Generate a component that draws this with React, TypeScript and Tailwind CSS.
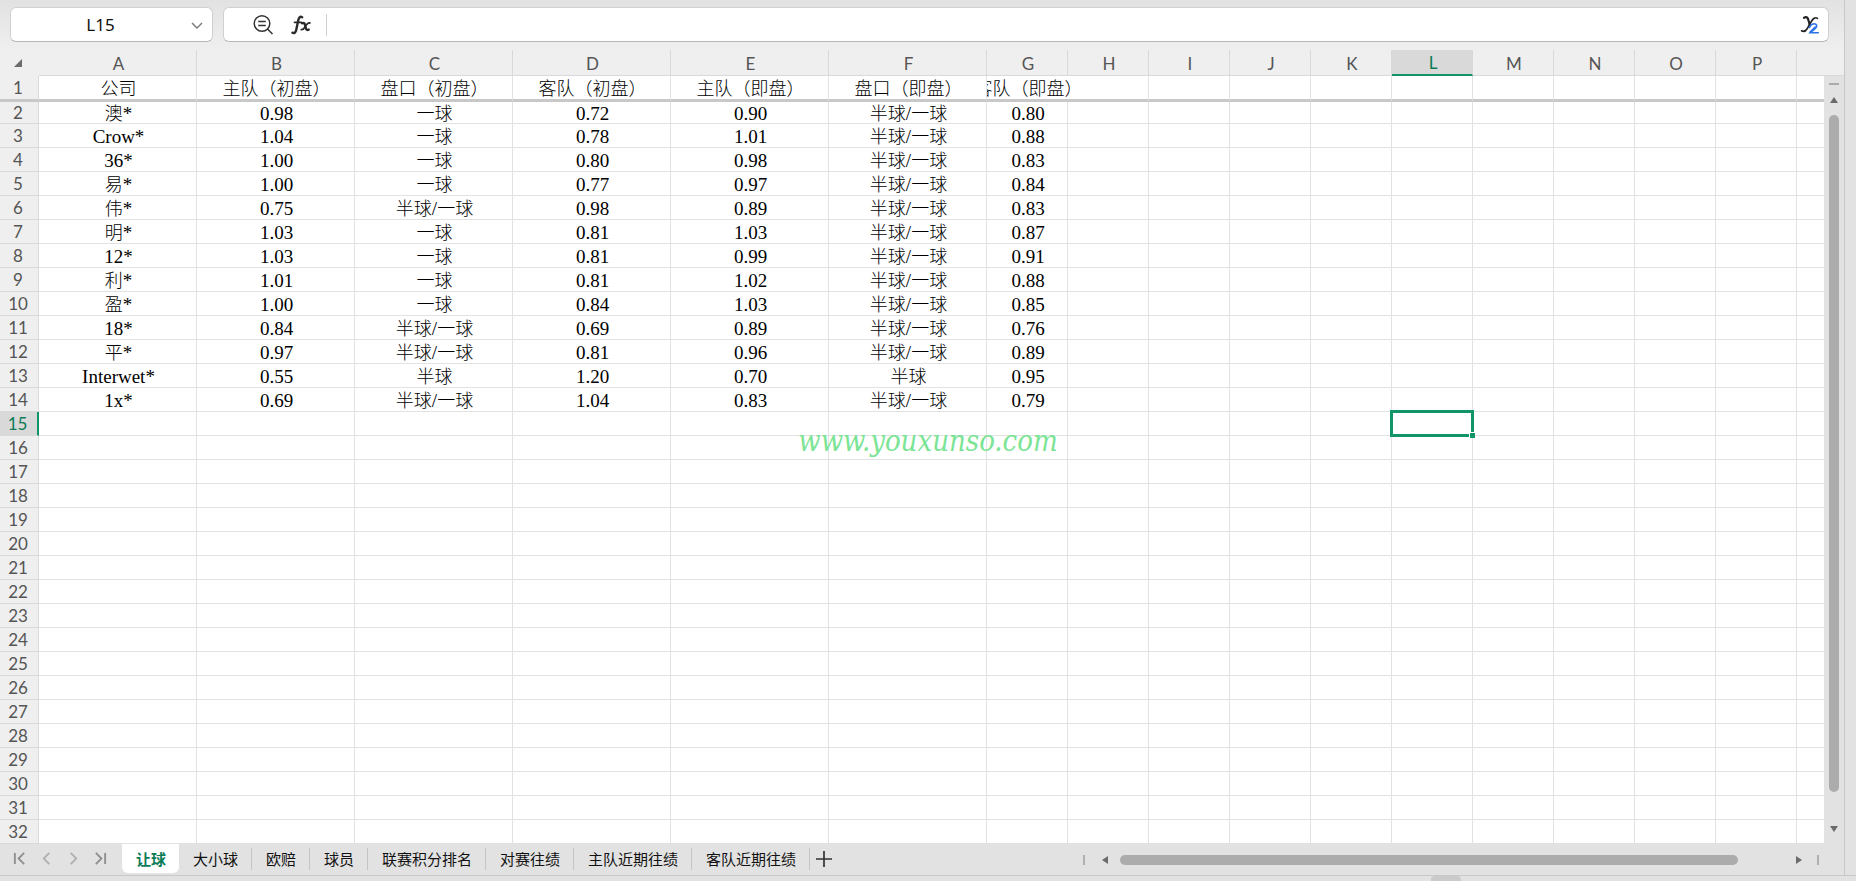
import { useState } from "react";

const wideCols = ["A", "B", "C", "D", "E", "F"];
const narrowCols = ["G", "H", "I", "J", "K", "L", "M", "N", "O", "P"];
const columns = [...wideCols, ...narrowCols];

const cells: string[][] = [
  ["公司", "主队（初盘）", "盘口（初盘）", "客队（初盘）", "主队（即盘）", "盘口（即盘）", "客队（即盘）"],
  ["澳*", "0.98", "一球", "0.72", "0.90", "半球/一球", "0.80"],
  ["Crow*", "1.04", "一球", "0.78", "1.01", "半球/一球", "0.88"],
  ["36*", "1.00", "一球", "0.80", "0.98", "半球/一球", "0.83"],
  ["易*", "1.00", "一球", "0.77", "0.97", "半球/一球", "0.84"],
  ["伟*", "0.75", "半球/一球", "0.98", "0.89", "半球/一球", "0.83"],
  ["明*", "1.03", "一球", "0.81", "1.03", "半球/一球", "0.87"],
  ["12*", "1.03", "一球", "0.81", "0.99", "半球/一球", "0.91"],
  ["利*", "1.01", "一球", "0.81", "1.02", "半球/一球", "0.88"],
  ["盈*", "1.00", "一球", "0.84", "1.03", "半球/一球", "0.85"],
  ["18*", "0.84", "半球/一球", "0.69", "0.89", "半球/一球", "0.76"],
  ["平*", "0.97", "半球/一球", "0.81", "0.96", "半球/一球", "0.89"],
  ["Interwet*", "0.55", "半球", "1.20", "0.70", "半球", "0.95"],
  ["1x*", "0.69", "半球/一球", "1.04", "0.83", "半球/一球", "0.79"],
];

const sheets = ["让球", "大小球", "欧赔", "球员", "联赛积分排名", "对赛往绩", "主队近期往绩", "客队近期往绩"];
const rows = Array.from({ length: 32 }, (_, i) => i + 1);

// Latin runs get a serif face, Chinese runs keep the cell font
function CellText({ text }: { text: string }) {
  return (
    <span>
      {text.split(/([\x20-\x7e]+)/).filter(Boolean).map((part, i) =>
        /^[\x20-\x7e]/.test(part) ? (
          <span key={i} className="font-['Liberation_Serif',serif] text-[19px] leading-[18px] font-normal">{part}</span>
        ) : (
          <span key={i}>{part}</span>
        )
      )}
    </span>
  );
}

function FormulaBar() {
  return (
    <div className="flex h-[50px] shrink-0 items-start gap-2.5 bg-linear-to-b from-[#e2e2e2] to-[#efefef] pt-[7px] pr-[15px] pl-2.5">
      <div className="flex h-[35px] w-[203px] items-center rounded-md border border-[#d0d0d0] border-b-[#b8b8b8] bg-white">
        <input
          aria-label="名称框"
          defaultValue="L15"
          className="w-[179px] bg-transparent text-center font-['Noto_Sans',sans-serif] text-[17px] text-[#111] outline-none"
        />
        <button aria-label="展开名称" className="text-[#777]">
          <svg width="14" height="14" viewBox="0 0 14 14" fill="none" stroke="currentColor" strokeWidth="1.4">
            <path d="M2 5l5 5 5-5" />
          </svg>
        </button>
      </div>
      <div className="flex h-[35px] flex-1 items-center rounded-md border border-[#d0d0d0] border-b-[#b8b8b8] bg-white pr-2 pl-7">
        <button aria-label="浏览公式" className="text-[#333]">
          <svg width="22" height="22" viewBox="0 0 22 22" fill="none" stroke="currentColor" strokeWidth="1.5">
            <circle cx="10" cy="9.5" r="7.8" />
            <path d="M6.2 7.500h7.600M6.200 11.500h7.600M15.500 15l5 5" />
          </svg>
        </button>
        <button aria-label="插入函数" className="ml-4 text-[#2b2b2b]">
          <svg width="22" height="22" viewBox="0 0 22 22" fill="none" stroke="currentColor" strokeLinecap="round">
            <path d="M12.200 3.200C10 2 8.800 3.800 8.200 6.500L6.200 16c-.6 2.700-1.800 3.600-3.800 2.700" strokeWidth="2.400" />
            <path d="M4.500 8.300h6.800" strokeWidth="1.800" />
            <path d="M12 9.300c2-1 2.700.2 3.200 2.200l.7 2.700c.4 1.600 1.200 2.200 2.800 1.400" strokeWidth="2.400" />
            <path d="M19.800 9c-2.300-.4-3.800 2.200-5 4.200-.9 1.600-1.800 2.700-3.500 2.500" strokeWidth="1.800" />
          </svg>
        </button>
        <div className="ml-3.5 h-[22px] w-px bg-[#d0d0d0]" />
        <input aria-label="编辑栏" className="min-w-0 flex-1 bg-transparent px-2 text-[17px] outline-none" />
        <button aria-label="公式工具">
          <svg width="20" height="20" viewBox="0 0 20 20" fill="none" strokeLinecap="round">
            <path d="M4 2.800c3-1.600 4 .2 4.700 3.200l1.200 4.500" stroke="#222" strokeWidth="2.200" />
            <path d="M17.500 3.300c-2.500-1.600-4.500.3-6.200 3.200l-4 7C5.800 16 4 17.300 1.500 15.800" stroke="#222" strokeWidth="1.600" />
            <path d="M9.500 12.500c1-3 4-4.500 6.300-3.200 2 1.200.4 3.400-1.500 5l-4 3.400h8" stroke="#2b74e4" strokeWidth="1.600" />
            <path d="M10 17l5-5" stroke="#2b74e4" strokeWidth="1.400" />
          </svg>
        </button>
      </div>
    </div>
  );
}

function Grid() {
  return (
    <div className="min-w-0 flex-1 overflow-hidden bg-white">
      <table className="w-full table-fixed border-separate border-spacing-0 font-[Lato,sans-serif] text-[17px] leading-5 text-[#555]">
        <colgroup>
          <col className="w-[39px]" />
          {wideCols.map((c) => <col key={c} className="w-[158px]" />)}
          {narrowCols.map((c) => <col key={c} className="w-[81px]" />)}
          <col />
        </colgroup>
        <thead>
          <tr className="h-[26px] bg-[#efefef]">
            <th className="border-b border-[#efefef] p-0">
              <svg className="ml-3.5" width="8" height="8" viewBox="0 0 8 8" fill="#6b6b6b" aria-label="全选">
                <path d="M8 0v8H0z" />
              </svg>
            </th>
            {columns.map((c) => (
              <th
                key={c}
                scope="col"
                className={`border-r border-[#d9d9d9] p-0 pt-0.5 pl-0.5 font-normal ${
                  c === "L" ? "border-b-2 border-b-[#12946a] bg-[#d9d9d9] text-[#0c7c57]" : "border-b"
                }`}
              >
                {c}
              </th>
            ))}
            <th className="border-b border-[#d9d9d9] p-0" />
          </tr>
        </thead>
        <tbody>
          {rows.map((r) => {
            const line = r === 1 ? "border-b-3 border-b-[#c8c8c8]" : "border-b";
            return (
              <tr key={r} className={r === 1 ? "h-[26px]" : r === 2 ? "h-[22px]" : "h-6"}>
                <th
                  scope="row"
                  className={`p-0 pr-0.5 font-normal ${line} ${
                    r === 15
                      ? "border-r-2 border-r-[#12946a] border-b-[#d9d9d9] bg-[#d9d9d9] text-[#0c7c57]"
                      : "border-r border-[#d9d9d9] bg-[#efefef]"
                  }`}
                >
                  {r}
                </th>
                {columns.map((c, i) => {
                  const text = cells[r - 1]?.[i];
                  const spills = r === 1 && c === "G";
                  const selected = r === 15 && c === "L";
                  return (
                    <td
                      key={c}
                      className={`border-[#e2e2e2] p-0 font-['Noto_Sans_CJK_SC',sans-serif] text-lg leading-[18px] font-light text-black ${line} ${
                        spills ? "" : "border-r"
                      } ${selected ? "relative" : ""}`}
                    >
                      {text && (
                        <div className="flex h-5 justify-center pb-0.5 pl-0.5 whitespace-nowrap [clip-path:inset(-4px_-40px_-4px_0)]">
                          <CellText text={text} />
                        </div>
                      )}
                      {selected && (
                        <div className="absolute -inset-0.5 border-3 border-[#12946a]">
                          <div className="absolute -right-1 -bottom-1 size-[6px] border-t border-l border-white bg-[#12946a]" />
                        </div>
                      )}
                    </td>
                  );
                })}
                <td className={`border-[#e2e2e2] p-0 ${line}`} />
              </tr>
            );
          })}
        </tbody>
      </table>
    </div>
  );
}

function VerticalScroll() {
  return (
    <div className="flex w-5 shrink-0 flex-col bg-[#efefef]">
      <div className="h-[25px]" />
      <div className="flex flex-1 flex-col items-center border-t border-[#d9d9d9] bg-[#e2e2e2] pt-[7px] pb-3">
        <div className="h-0.5 w-2.5 bg-[#acacac]" />
        <button aria-label="向上滚动" className="mt-3 mb-3">
          <svg width="8" height="6" viewBox="0 0 8 6" fill="#6b6b6b"><path d="M4 0l4 6H0z" /></svg>
        </button>
        <div className="w-2.5 flex-1 rounded-full bg-[#acacac]" />
        <button aria-label="向下滚动" className="mt-[34px]">
          <svg width="8" height="6" viewBox="0 0 8 6" fill="#6b6b6b"><path d="M0 0h8L4 6z" /></svg>
        </button>
      </div>
    </div>
  );
}

const navIcons = [
  { label: "第一个工作表", d: "M2 1v12M12 1L6 7l6 6", tone: "text-[#8f8f8f]" },
  { label: "上一个工作表", d: "M10 1L4 7l6 6", tone: "text-[#b0b0b0]" },
  { label: "下一个工作表", d: "M4 1l6 6-6 6", tone: "text-[#b0b0b0]" },
  { label: "最后一个工作表", d: "M2 1l6 6-6 6M12 1v12", tone: "text-[#8f8f8f]" },
];

function SheetTabs() {
  const [active, setActive] = useState("让球");

  return (
    <div className="flex h-8 shrink-0 items-start border-b border-[#c8c8c8] bg-[#e2e2e2]">
      <div className="flex h-7 w-[122px] items-center gap-3.5 pl-[13px]">
        {navIcons.map((n) => (
          <button key={n.label} aria-label={n.label} className={n.tone}>
            <svg width="13" height="13" viewBox="0 0 14 14" fill="none" stroke="currentColor" strokeWidth="2"><path d={n.d} /></svg>
          </button>
        ))}
      </div>
      <div className="flex items-center font-['Noto_Sans_CJK_SC',sans-serif] text-[15px] leading-5">
        {sheets.map((s) => (
          <div key={s} className="flex items-center">
            <button
              onClick={() => setActive(s)}
              className={
                s === active
                  ? "h-[29px] rounded-b-md bg-white pr-[13px] pl-3.5 font-bold text-[#0c7c57]"
                  : "h-[29px] pr-[13px] pl-3.5 text-[#111]"
              }
            >
              {s}
            </button>
            {s !== active && <div className="h-[22px] w-px bg-[#c4c4c4]" />}
          </div>
        ))}
      </div>
      <button aria-label="新建工作表" className="mt-1.5 ml-[5px] text-[#333]">
        <svg width="18" height="18" viewBox="0 0 18 18" stroke="currentColor" strokeWidth="1.700"><path d="M9 1v16M1 9h16" /></svg>
      </button>
      <div className="ml-auto flex h-[31px] w-[761px] items-center pr-[25px]">
        <div className="h-2.5 w-0.5 bg-[#b0b0b0]" />
        <button aria-label="向左滚动" className="mr-3 ml-[17px]">
          <svg width="6" height="8" viewBox="0 0 6 8" fill="#6b6b6b"><path d="M6 0v8L0 4z" /></svg>
        </button>
        <div className="h-2.5 flex-1 rounded-full bg-[#acacac]" />
        <button aria-label="向右滚动" className="mr-[15px] ml-[58px]">
          <svg width="6" height="8" viewBox="0 0 6 8" fill="#6b6b6b"><path d="M0 0l6 4-6 4z" /></svg>
        </button>
        <div className="h-2.5 w-0.5 bg-[#b0b0b0]" />
      </div>
    </div>
  );
}

export default function App() {
  return (
    <div className="relative flex h-screen flex-col overflow-hidden bg-[#e2e2e2]">
      <div className="flex min-h-0 flex-1">
        <div className="flex min-w-0 flex-1 flex-col">
          <FormulaBar />
          <div className="flex min-h-0 flex-1">
            <Grid />
            <VerticalScroll />
          </div>
          <SheetTabs />
        </div>
        <div className="w-3 shrink-0 border-b border-l border-[#c8c8c8]" />
      </div>
      <div className="flex h-[5px] shrink-0 justify-end pr-[395px]">
        <div className="w-[30px] rounded-t-sm bg-[#cacaca]" />
      </div>

      {/* Watermark */}
      <div className="pointer-events-none absolute inset-0 flex items-center justify-center">
        <span className="font-['DejaVu_Serif_Condensed','DejaVu_Serif',serif] text-[29px] leading-8 text-[#7be495] italic">
          www.youxunso.com
        </span>
      </div>
    </div>
  );
}
